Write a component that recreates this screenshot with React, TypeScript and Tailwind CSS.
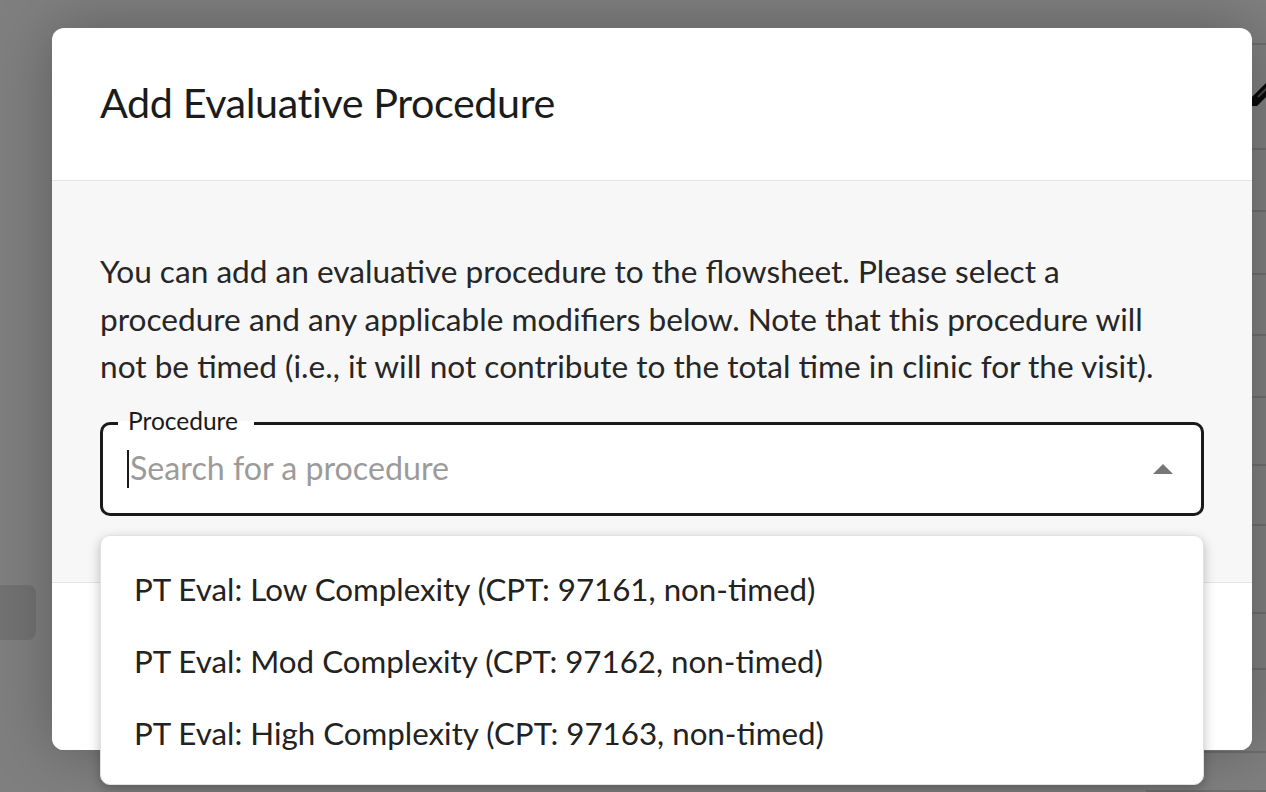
import { useState } from "react";

const procedures = [
  "PT Eval: Low Complexity (CPT: 97161, non-timed)",
  "PT Eval: Mod Complexity (CPT: 97162, non-timed)",
  "PT Eval: High Complexity (CPT: 97163, non-timed)",
];

// rows of the flowsheet behind the modal (heights in px)
const rowHeights = [47, 108, 65, 65, 63, 64, 70, 63, 91, 58, 86, 40];

function PageBehind() {
  return (
    <div className="flex h-full w-full bg-white">
      <div className="flex flex-1 flex-col pt-[585px]">
        <div className="h-[55px] w-[36px] rounded-r-[8px] bg-[#e4e4e4]" />
      </div>
      <div className="flex w-[120px] shrink-0 flex-col">
        {rowHeights.map((h, i) => (
          <div
            key={i}
            className="flex w-full items-center justify-end border-b-[2px] border-[#dcdcdc]"
            style={{ height: h }}
          >
            {i === 1 && (
              <svg width="30" height="30" viewBox="0 0 30 30" className="-mr-[14px] -mt-[12px]">
                <path d="M4 26 L24 6" stroke="#151515" strokeWidth="10" strokeLinecap="round" />
                <path d="M8 21 L18 11" stroke="#8a8a8a" strokeWidth="2" />
              </svg>
            )}
          </div>
        ))}
      </div>
    </div>
  );
}

export default function App() {
  const [query, setQuery] = useState("");

  return (
    <div className="relative h-screen w-full overflow-hidden font-['Lato',sans-serif]">
      <PageBehind />
      <div className="absolute inset-0 bg-[rgba(0,0,0,0.5)]" />

      <div className="absolute left-[52px] top-[28px] w-[1200px] rounded-[12px] bg-white shadow-[0_0_60px_rgba(0,0,0,0.28)]">
        <div className="flex h-[153px] items-center border-b border-[#e3e3e3] px-[48px] pb-[2px]">
          <h2 className="m-0 text-[41.3px] font-normal tracking-[-0.01em] text-[#1b1b1b]">Add Evaluative Procedure</h2>
        </div>

        <div className="bg-[#f7f7f7] px-[48px] pb-[66px] pt-[67px]">
          <p className="m-0 text-[31.6px] leading-[47.5px] text-[#262626]">
            You can add an evaluative procedure to the flowsheet. Please select a
            <br />
            procedure and any applicable modifiers below. Note that this procedure will
            <br />
            not be timed (i.e., it will not contribute to the total time in clinic for the visit).
          </p>

          <div className="relative mt-[31px]">
            <div className="flex h-[94px] items-center rounded-[10px] border-[3px] border-[#1a1a1a] bg-white pl-[24px] pr-[28px]">
              <span className="h-[38px] w-[2px] shrink-0 bg-[#1a1a1a]" />
              <input
                value={query}
                onChange={(e) => setQuery(e.target.value)}
                placeholder="Search for a procedure"
                className="min-w-0 flex-1 bg-transparent pl-[1px] text-[32.2px] text-[#222] outline-none placeholder:text-[#9b9b9b]"
              />
              <svg width="20" height="10" viewBox="0 0 20 10">
                <polygon points="10,0 20,10 0,10" fill="#777" />
              </svg>
            </div>
            <span className="absolute -top-[15px] left-[18px] bg-[linear-gradient(to_bottom,#f7f7f7_50%,#ffffff_50%)] pl-[10px] pr-[16px] text-[24.5px] leading-[28px] text-[#1a1a1a]">
              Procedure
            </span>

            <ul className="absolute left-0 right-0 top-[113px] z-10 m-0 list-none rounded-[10px] border border-[#e2e2e2] bg-white pb-[14px] pt-[18px] shadow-[0_4px_12px_rgba(0,0,0,0.25)]">
              {procedures.map((p) => (
                <li
                  key={p}
                  className="flex h-[72px] cursor-pointer items-center px-[33px] text-[31.3px] text-[#222] hover:bg-[#f3f3f3]"
                >
                  {p}
                </li>
              ))}
            </ul>
          </div>
        </div>

        <div className="h-[168px] rounded-b-[12px] border-t border-[#e3e3e3] bg-white" />
      </div>
    </div>
  );
}
